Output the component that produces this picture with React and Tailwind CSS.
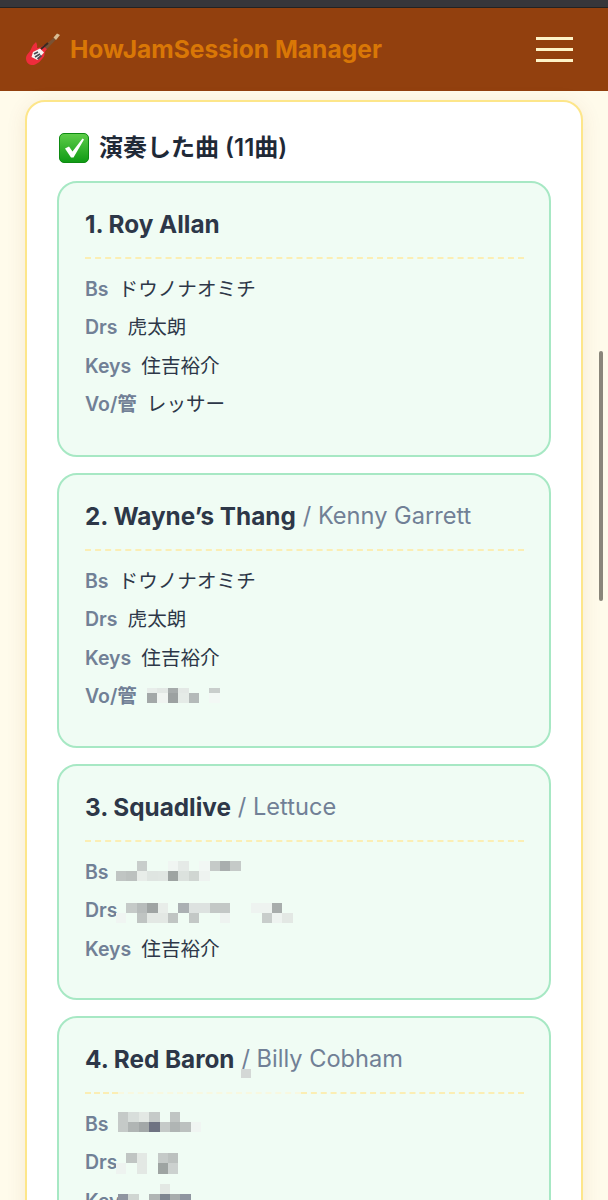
const songs = [
  {
    no: 1,
    title: "Roy Allan",
    rows: [
      { label: "Bs", value: "ドウノナオミチ" },
      { label: "Drs", value: "虎太朗" },
      { label: "Keys", value: "住吉裕介" },
      { label: "Vo/管", value: "レッサー" },
    ],
    height: "h-[276px]",
  },
  {
    no: 2,
    title: "Wayne’s Thang",
    artist: "Kenny Garrett",
    rows: [
      { label: "Bs", value: "ドウノナオミチ" },
      { label: "Drs", value: "虎太朗" },
      { label: "Keys", value: "住吉裕介" },
      {
        label: "Vo/管",
        mosaic: {
          pos: "left-[62px] top-[10px]",
          clip: 5.2,
          cells: [
            ["#e8edea", "#e3e8e5", "#a6abab", "#e3e8e5", "", "", "#c9cecc"],
            ["#a3a8a8", "#f0f4f1", "#9ca1a1", "#e5ebe7", "#b4bab9", "", "#f3f8f5"],
          ],
        },
      },
    ],
    height: "h-[275px]",
  },
  {
    no: 3,
    title: "Squadlive",
    artist: "Lettuce",
    rows: [
      {
        label: "Bs",
        mosaic: {
          pos: "left-[31px] top-[7.5px]",
          cells: [
            ["", "", "#c8cdcb", "", "", "#f0f5f2", "#e5eae7", "", "#f2f7f4", "#c5cac8", "#a9aeae", "#c5cac8"],
            ["#c0c5c3", "#bcc1bf", "#e8ede9", "#dfe5e1", "#e0e6e2", "#9ea4a2", "#dce2de", "#d0d6d2", "#eef3f0"],
          ],
        },
      },
      {
        label: "Drs",
        mosaic: {
          pos: "left-[31px] top-[11px]",
          cells: [
            ["", "#c5cac8", "#b7bcbb", "#9fa4a3", "#e8ede9", "", "#abb0b3", "#dde2e0", "#dde2e0", "#c3c8c6", "#c3c8c6", "", "", "#eef3f0", "#eef3f0", "#a8adac"],
            ["#f0f5f2", "", "#bfc4c2", "#e3e8e4", "#e3e8e4", "#c0c5c3", "", "#c3c8c6", "", "", "#eef3f0", "", "", "", "#c8cdcb", "#eef3f0", "#e3e8e4"],
          ],
        },
      },
      { label: "Keys", value: "住吉裕介" },
    ],
    height: "h-[236px]",
  },
  {
    no: 4,
    title: "Red Baron",
    artist: "Billy Cobham",
    blurred: true,
    rows: [
      {
        label: "Bs",
        mosaic: {
          pos: "left-[33px] top-[6.7px]",
          cells: [
            ["#c5cac8", "#d8dedb", "#e3e8e4", "#c5cac8", "", "#c0c5c3"],
            ["#c5cac8", "#b0b5b4", "#a3a8a8", "#6f7382", "#c5cac8", "#b0b5b4", "#bcc1bf", "#f0f5f2"],
          ],
        },
      },
      {
        label: "Drs",
        mosaic: {
          pos: "left-[31px] top-[9.7px]",
          cells: [
            ["", "#c0c5c3", "#e3e8e4", "", "#c5cac8", "#bcc1bf"],
            ["#eef3f0", "", "#e3e8e4", "", "#9ea4a2", "#ccd1cf"],
          ],
        },
      },
      {
        label: "Keys",
        mosaic: {
          pos: "left-[33px] top-[2px]",
          cells: [
            ["", "", "", "", "#e3e8e4"],
            ["#8f95a0", "#d0d6d2", "", "#b0b5b4", "#7f8590", "#a8adad", "#8f95a0"],
          ],
        },
      },
    ],
    height: "h-[276px]",
  },
];

// pixelated bits that sit on top of the names
function Mosaic({ cells, pos, clip = 0 }) {
  const size = 10.4;
  const cols = Math.max(...cells.map((r) => r.length));
  const w = cols * size;
  const h = cells.length * size;
  return (
    <svg
      className={`absolute ${pos}`}
      width={w}
      height={h - clip}
      viewBox={`0 ${clip} ${w} ${h - clip}`}
      shapeRendering="crispEdges"
    >
      {cells.map((row, y) =>
        row.map((c, x) =>
          c ? <rect key={`${x}-${y}`} x={x * size} y={y * size} width={size} height={size} fill={c} /> : null
        )
      )}
    </svg>
  );
}

function GuitarIcon() {
  return (
    <svg width="36" height="34" viewBox="0 0 36 34" className="shrink-0">
      <path d="M18 15 L29 5.5 L31 7.5 L21 18 Z" fill="#7a5233" />
      <path d="M28.5 5.5 L32 1.5 L35 3 L31 8 Z" fill="#d8bd94" />
      <path
        d="M11 10 C12 12 12.5 14 12 16 C14.5 16 17 15 19 13 C19.5 15 20.5 16.5 22 17 C20.5 18.5 19.5 20 19.5 22 C19.5 24 18.5 25.5 17 27 C14.5 30 11 33.5 6.5 33 C3 32.5 1 29.5 1 26.5 C1 24 2 22.5 3.5 21 C5.5 19 6 17 7 15 C8 13 9.5 11.5 11 10 Z"
        fill="#ee2c3c"
      />
      <path d="M8 20 L15 16.5 L19 20.5 L12.5 28 L6.5 25 Z" fill="#f6f3f0" />
      <path d="M16 17 L23 11" stroke="#3a2a22" strokeWidth="2" />
      <path d="M9 22 L13 20 M10 25 L15 22 M12.5 27 L16.5 23.5" stroke="#4a4b52" strokeWidth="1.7" />
    </svg>
  );
}

function CheckIcon() {
  return (
    <svg width="30" height="30" viewBox="0 0 30 30" className="shrink-0">
      <defs>
        <linearGradient id="chk" x1="0" y1="0" x2="0" y2="1">
          <stop offset="0" stopColor="#5fce4a" />
          <stop offset="1" stopColor="#0f9a14" />
        </linearGradient>
      </defs>
      <rect x="0.5" y="0.5" width="29" height="29" rx="4.5" fill="url(#chk)" stroke="#0e8a12" />
      <path d="M6 15.5 L10 13.5 L13.5 18.5 L23.5 5.5 L25 6.5 L14.5 24.5 L12 24.5 Z" fill="#fff" />
    </svg>
  );
}

function Divider({ blurred }) {
  if (blurred) {
    return (
      <div className="flex mt-[16px]">
        <div className="w-[33px] border-t-2 border-dashed border-[#fbeeb4]" />
        <div className="w-[183px] border-t-2 border-dashed border-[#f8f8e0]" />
        <div className="flex-1 border-t-2 border-dashed border-[#fbeeb4]" />
      </div>
    );
  }
  return <div className="mt-[16px] border-t-2 border-dashed border-[#fbeeb4]" />;
}

function SongCard({ song }) {
  return (
    <div className={`${song.height} shrink-0 rounded-[20px] border-2 border-[#a7e8c4] bg-[#f0fcf4] pt-[24px] pl-[26px] pr-[25px]`}>
      <div className="relative h-[34px] flex items-center text-[24.3px] leading-[34px] whitespace-nowrap">
        <span className="font-bold text-[#2d3748]">
          {song.no}. {song.title}
        </span>
        {song.artist && <span className="ml-[7px] font-normal text-[23.6px] text-[#718096]">/ {song.artist}</span>}
        {song.blurred && <span className="absolute left-[156px] top-[27px] w-[10px] h-[9px] bg-[#d4d8d6]" />}
      </div>
      <Divider blurred={song.blurred} />
      <div className="mt-[11px]">
        {song.rows.map((row) => (
          <div key={row.label} className="relative h-[38.6px] flex items-center gap-[10px] whitespace-nowrap">
            <span className="text-[19.5px] font-semibold text-[#718096]">{row.label}</span>
            {row.value && <span className="text-[19.6px] text-[#2d3748]">{row.value}</span>}
            {row.mosaic && <Mosaic {...row.mosaic} />}
          </div>
        ))}
      </div>
    </div>
  );
}

export default function App() {
  return (
    <div className="relative h-[1200px] overflow-hidden bg-[#fffbeb] font-['Inter','Noto_Sans_CJK_JP',sans-serif]">
      <div className="h-[8px] bg-[#36363a] border-b border-[#222]" />
      <header className="h-[83px] bg-[#92400e] flex items-center justify-between pl-[25px] pr-[35px]">
        <div className="flex items-center gap-[9px]">
          <GuitarIcon />
          <h1 className="text-[24.6px] font-bold text-[#d97706] whitespace-nowrap">HowJamSession Manager</h1>
        </div>
        <div className="flex flex-col gap-[8px] w-[37px]">
          <span className="h-[3px] bg-[#fef3c7]" />
          <span className="h-[3px] bg-[#fef3c7]" />
          <span className="h-[3px] bg-[#fef3c7]" />
        </div>
      </header>
      <main className="pt-[9px] px-[25px]">
        <section className="rounded-[20px] border-2 border-[#fde68a] bg-white shadow-[0_4px_20px_rgba(146,64,14,0.1)] pt-[29px] px-[30px]">
          <h2 className="flex items-center gap-[10px] pl-[2px] h-[34px] text-[24px] font-semibold text-[#1f2937]">
            <CheckIcon />
            演奏した曲 (11曲)
          </h2>
          <div className="mt-[16px] flex flex-col gap-[16px]">
            {songs.map((song) => (
              <SongCard key={song.no} song={song} />
            ))}
          </div>
        </section>
      </main>
      <div className="absolute left-[598.5px] top-[351px] w-[4px] h-[250px] rounded-full bg-[#8a867a]" />
    </div>
  );
}
